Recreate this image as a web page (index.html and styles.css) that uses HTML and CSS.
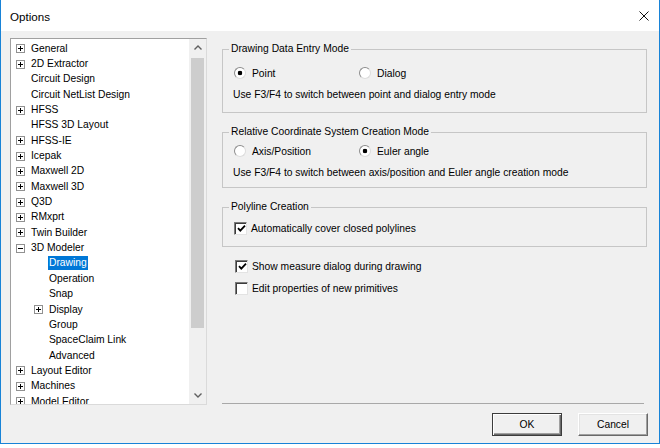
FILE: index.html
```html
<!DOCTYPE html>
<html>
<head>
<meta charset="utf-8">
<title>Options</title>
<link rel="stylesheet" href="styles.css">
</head>
<body>
<div class="window">
  <div class="titlebar">
    <span class="title">Options</span>
    <span class="close"><svg width="10" height="10" viewBox="0 0 10 10"><path d="M0.5 0.5L9.5 9.5M9.5 0.5L0.5 9.5" stroke="#111" stroke-width="1" fill="none"/></svg></span>
  </div>
  <div class="client">
    <div class="main">
      <div class="tree">
        <ul class="tree-list">
          <li class="row"><span class="exp plus"></span><span class="label">General</span></li>
          <li class="row"><span class="exp plus"></span><span class="label">2D Extractor</span></li>
          <li class="row"><span class="exp"></span><span class="label">Circuit Design</span></li>
          <li class="row"><span class="exp"></span><span class="label">Circuit NetList Design</span></li>
          <li class="row"><span class="exp plus"></span><span class="label">HFSS</span></li>
          <li class="row"><span class="exp"></span><span class="label">HFSS 3D Layout</span></li>
          <li class="row"><span class="exp plus"></span><span class="label">HFSS-IE</span></li>
          <li class="row"><span class="exp plus"></span><span class="label">Icepak</span></li>
          <li class="row"><span class="exp plus"></span><span class="label">Maxwell 2D</span></li>
          <li class="row"><span class="exp plus"></span><span class="label">Maxwell 3D</span></li>
          <li class="row"><span class="exp plus"></span><span class="label">Q3D</span></li>
          <li class="row"><span class="exp plus"></span><span class="label">RMxprt</span></li>
          <li class="row"><span class="exp plus"></span><span class="label">Twin Builder</span></li>
          <li class="row"><span class="exp minus"></span><span class="label">3D Modeler</span></li>
          <li class="row l2"><span class="exp"></span><span class="label sel">Drawing</span></li>
          <li class="row l2"><span class="exp"></span><span class="label">Operation</span></li>
          <li class="row l2"><span class="exp"></span><span class="label">Snap</span></li>
          <li class="row l2"><span class="exp plus"></span><span class="label">Display</span></li>
          <li class="row l2"><span class="exp"></span><span class="label">Group</span></li>
          <li class="row l2"><span class="exp"></span><span class="label">SpaceClaim Link</span></li>
          <li class="row l2"><span class="exp"></span><span class="label">Advanced</span></li>
          <li class="row"><span class="exp plus"></span><span class="label">Layout Editor</span></li>
          <li class="row"><span class="exp plus"></span><span class="label">Machines</span></li>
          <li class="row"><span class="exp plus"></span><span class="label">Model Editor</span></li>
        </ul>
        <div class="vscroll">
          <div class="sb-btn"><svg width="8" height="5" viewBox="0 0 8 5"><path d="M0.5 4.5L4 1L7.5 4.5" stroke="#606060" stroke-width="1.4" fill="none"/></svg></div>
          <div class="sb-track"><div class="sb-thumb"></div></div>
          <div class="sb-btn"><svg width="8" height="5" viewBox="0 0 8 5"><path d="M0.5 0.5L4 4L7.5 0.5" stroke="#606060" stroke-width="1.4" fill="none"/></svg></div>
        </div>
      </div>
      <div class="panel">
        <fieldset class="group g1">
          <legend>Drawing Data Entry Mode</legend>
          <div class="body">
            <div class="opts">
              <span class="opt"><span class="radio on"></span>Point</span>
              <span class="opt"><span class="radio"></span>Dialog</span>
            </div>
            <div class="desc">Use F3/F4 to switch between point and dialog entry mode</div>
          </div>
        </fieldset>
        <fieldset class="group g2">
          <legend>Relative Coordinate System Creation Mode</legend>
          <div class="body">
            <div class="opts">
              <span class="opt"><span class="radio"></span>Axis/Position</span>
              <span class="opt"><span class="radio on"></span>Euler angle</span>
            </div>
            <div class="desc">Use F3/F4 to switch between axis/position and Euler angle creation mode</div>
          </div>
        </fieldset>
        <fieldset class="group g3">
          <legend>Polyline Creation</legend>
          <div class="body">
            <div class="check-row"><span class="checkbox"><svg width="9" height="9" viewBox="0 0 9 9"><path d="M1 4.2L3.3 6.6L8 1.6" stroke="#000" stroke-width="1.8" fill="none"/></svg></span>Automatically cover closed polylines</div>
          </div>
        </fieldset>
        <div class="check-row extra first"><span class="checkbox"><svg width="9" height="9" viewBox="0 0 9 9"><path d="M1 4.2L3.3 6.6L8 1.6" stroke="#000" stroke-width="1.8" fill="none"/></svg></span>Show measure dialog during drawing</div>
        <div class="check-row extra"><span class="checkbox"></span>Edit properties of new primitives</div>
        <div class="separator"></div>
      </div>
    </div>
    <div class="footer">
      <button class="btn default">OK</button>
      <button class="btn">Cancel</button>
    </div>
  </div>
</div>
</body>
</html>
```
FILE: styles.css
```css
body {
  margin: 0;
  background: #fff;
  font-family: "Liberation Sans", Arial, sans-serif;
  font-size: 10.3px;
  color: #000;
}

.window {
  width: 660px;
  height: 444px;
  box-sizing: border-box;
  border: 1px solid #1883d7;
  border-top: 0;
  display: flex;
  flex-direction: column;
  background: #f0f0f0;
}

.titlebar {
  height: 31px;
  flex: none;
  background: #fff;
  display: flex;
  align-items: center;
  justify-content: space-between;
  padding-left: 9px;
}

.title {
  font-size: 11.6px;
  margin-top: 2px;
}

.close {
  width: 30px;
  height: 31px;
  display: flex;
  align-items: center;
  justify-content: center;
  margin-top: 1px;
}

.client {
  flex: 1;
  display: flex;
  flex-direction: column;
}

.main {
  display: flex;
  padding-top: 7px;
  padding-left: 9px;
}

.tree {
  width: 197px;
  height: 367px;
  box-sizing: border-box;
  border: 1px solid;
  border-color: #a0a0a0 #dadada #dadada #a0a0a0;
  background: #fff;
  display: flex;
  flex: none;
}

.tree-list {
  flex: 1;
  margin: 0;
  padding: 2px 0 0;
  list-style: none;
  overflow: hidden;
}

.row {
  display: flex;
  align-items: center;
  height: 15.35px;
  padding-left: 5px;
  white-space: nowrap;
}

.row.l2 {
  padding-left: 23px;
}

.exp {
  width: 9px;
  height: 9px;
  box-sizing: border-box;
  flex: none;
  margin-right: 5px;
}

.exp.plus {
  border: 1px solid #919191;
  background:
    linear-gradient(#000, #000) center / 5px 1px no-repeat,
    linear-gradient(#000, #000) center / 1px 5px no-repeat,
    #fff;
}

.exp.minus {
  border: 1px solid #919191;
  background:
    linear-gradient(#000, #000) center / 5px 1px no-repeat,
    #fff;
}

.label {
  padding: 0 1px;
  line-height: 14px;
}

.label.sel {
  background: #0078d7;
  color: #fff;
}

.vscroll {
  width: 17px;
  flex: none;
  background: #f0f0f0;
  display: flex;
  flex-direction: column;
}

.sb-btn {
  height: 17px;
  flex: none;
  display: flex;
  align-items: center;
  justify-content: center;
}

.sb-track {
  flex: 1;
  padding-top: 2px;
}

.sb-thumb {
  height: 270px;
  margin: 0 2px;
  background: #cdcdcd;
}

.panel {
  flex: 1;
  margin: 5px 12px 0 15px;
  display: flex;
  flex-direction: column;
}

.group {
  margin: 0;
  padding: 0;
  border: 1px solid #c6c6c6;
  min-width: 0;
}

.group legend {
  padding: 0 2px;
  margin-left: 6px;
  line-height: 12px;
}

.g1 .body {
  padding: 10px 10px 9px;
}

.g2 {
  margin-top: 13px;
}

.g2 .body {
  padding: 5px 10px 6px;
}

.g3 {
  margin-top: 13px;
}

.g3 .body {
  padding: 7px 10px 10px 11px;
}

.opts {
  display: flex;
  height: 16px;
  align-items: center;
  padding-left: 1px;
}

.opt {
  display: flex;
  align-items: center;
}

.opt:first-child {
  width: 125px;
}

.radio {
  width: 12px;
  height: 12px;
  box-sizing: border-box;
  border-radius: 50%;
  border: 1px solid;
  border-color: #8c8c8c #dcdcdc #dcdcdc #8c8c8c;
  background: #fff;
  margin-right: 6px;
  flex: none;
}

.radio.on {
  background: radial-gradient(circle, #000 0 2px, #fff 2.6px);
}

.desc {
  margin-top: 6px;
  line-height: 16px;
}

.check-row {
  height: 16px;
  display: flex;
  align-items: center;
}

.checkbox {
  width: 13px;
  height: 13px;
  box-sizing: border-box;
  border: 1px solid;
  border-color: #7a7a7a #e3e3e3 #e3e3e3 #7a7a7a;
  box-shadow: inset 1px 1px 0 #3c3c3c;
  background: #fff;
  margin-right: 4px;
  flex: none;
  display: flex;
  align-items: center;
  justify-content: center;
}

.checkbox svg {
  margin: 1px 0 0 1px;
}

.extra {
  padding-left: 13px;
  margin-top: 6px;
}

.extra.first {
  margin-top: 11px;
}

.separator {
  margin-top: auto;
  margin-right: 3px;
  margin-bottom: 1px;
  border-top: 1px solid #a8a8a8;
}

.footer {
  display: flex;
  justify-content: flex-end;
  gap: 16px;
  padding: 8px 11px 0 0;
}

.btn {
  width: 70px;
  height: 23px;
  box-sizing: border-box;
  font: inherit;
  color: #000;
  background: #f0f0f0;
  border: 1px solid;
  border-color: #fff #696969 #696969 #fff;
  box-shadow: inset -1px -1px 0 #a0a0a0, inset 1px 1px 0 #e3e3e3;
  padding: 0;
}

.btn.default {
  border: 1px solid #3c3c3c;
  box-shadow: inset 1px 1px 0 #fff, inset -1px -1px 0 #696969, inset -2px -2px 0 #a0a0a0;
}
```
